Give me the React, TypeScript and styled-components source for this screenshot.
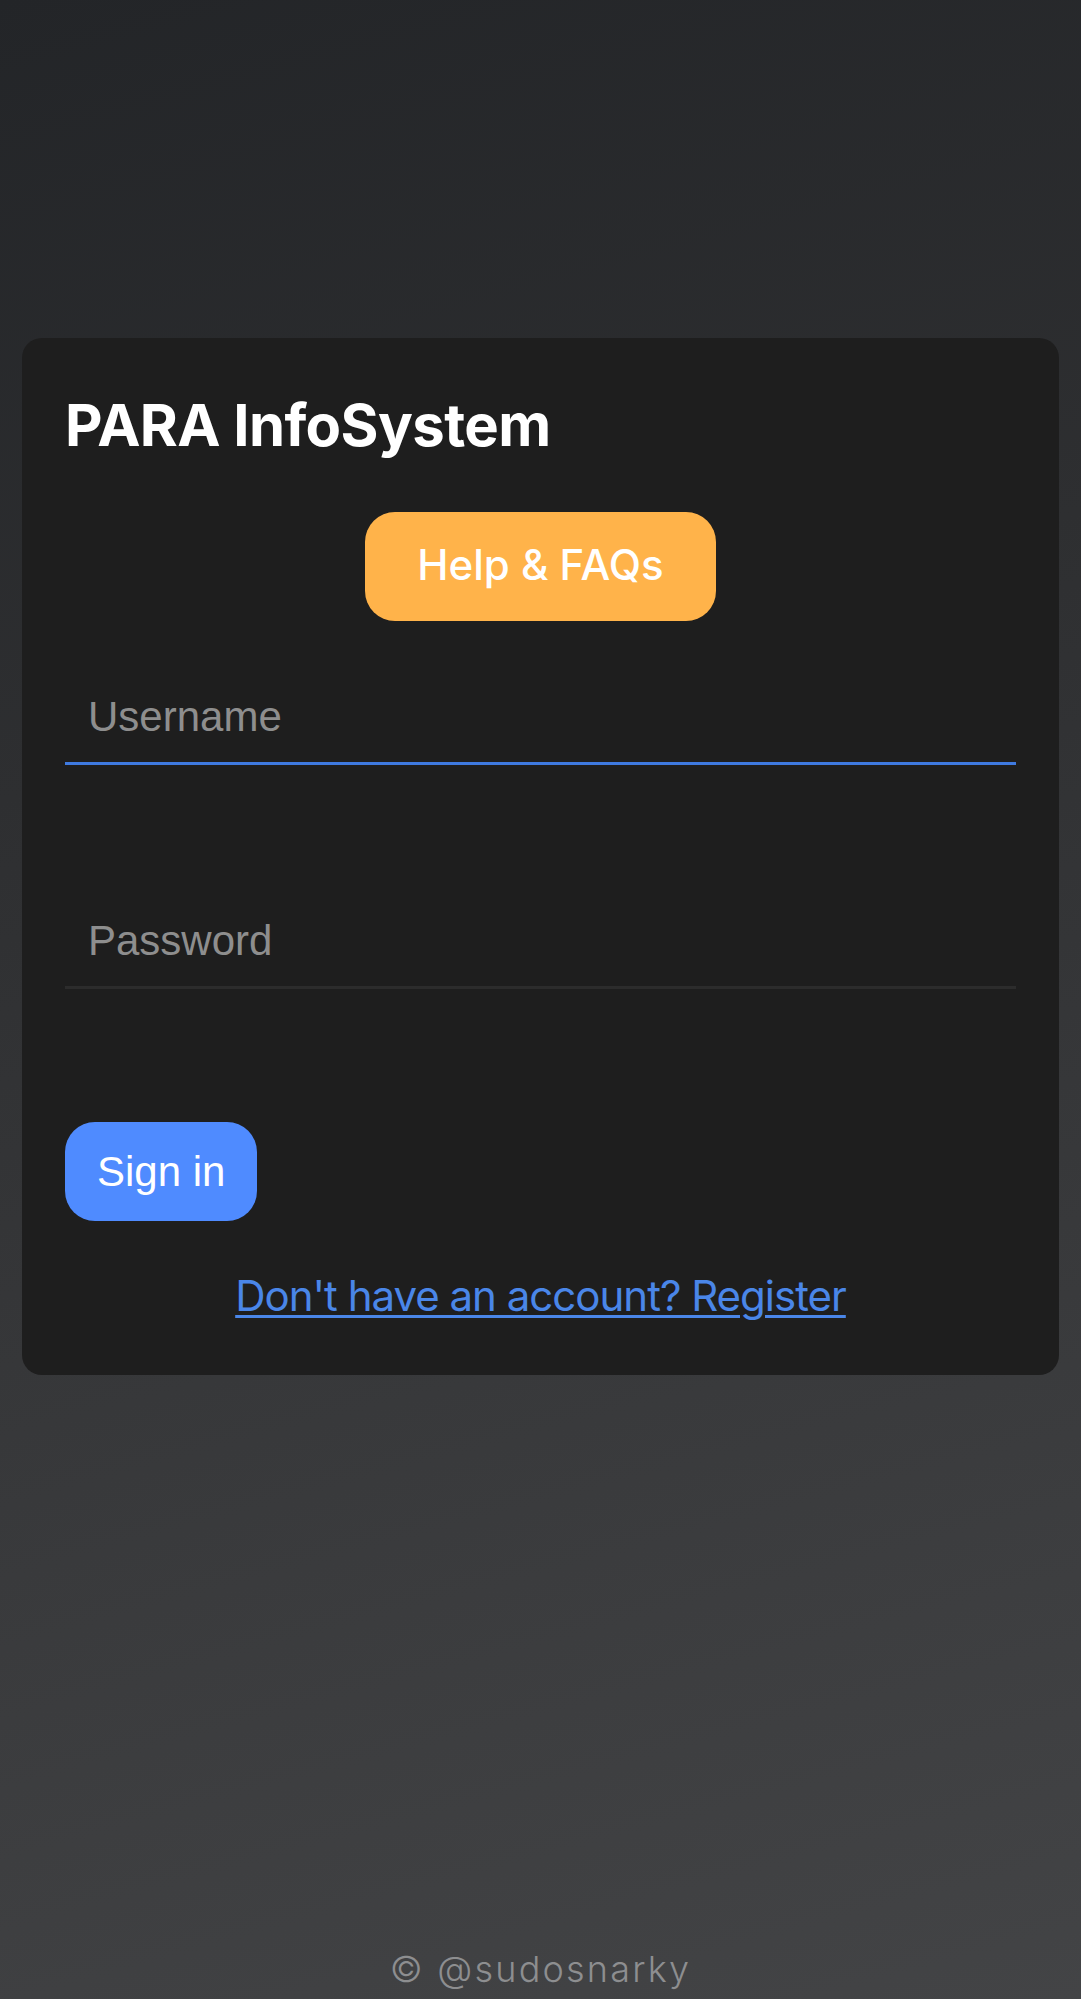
import React from "react";
import styled, { createGlobalStyle } from "styled-components";

const GlobalStyle = createGlobalStyle`
  html, body {
    margin: 0;
    padding: 0;
  }
  body {
    background: linear-gradient(165deg, #232528 0%, #2e2f31 35%, #434446 100%);
    min-height: 1999px;
    font-family: Inter, "Noto Sans", sans-serif;
  }
  * { box-sizing: border-box; }
`;

const Page = styled.div`
  min-height: 1999px;
  display: flex;
  flex-direction: column;
  align-items: stretch;
  padding: 338px 22px 8px 22px;
`;

const Card = styled.main`
  background: #1e1e1e;
  border-radius: 20px;
  padding: 52px 43px 45px 43px;
  display: flex;
  flex-direction: column;
`;

const Title = styled.h1`
  margin: 0;
  font-family: Inter, sans-serif;
  font-weight: 700;
  font-size: 58px;
  line-height: 70px;
  letter-spacing: -0.6px;
  color: #ffffff;
`;

const HelpRow = styled.div`
  display: flex;
  justify-content: center;
  margin-top: 52px;
`;

const HelpButton = styled.button`
  height: 109px;
  padding: 0 52px 4px 52px;
  border: none;
  border-radius: 30px;
  background: #ffb34a;
  color: #ffffff;
  font-family: Inter, sans-serif;
  font-weight: 500;
  font-size: 42px;
  display: flex;
  align-items: center;
  cursor: pointer;
`;

const Field = styled.input<{ $focused?: boolean; $first?: boolean }>`
  display: block;
  width: 100%;
  margin-top: ${(p) => (p.$first ? "61px" : "141px")};
  padding: 12px 0 23px 23px;
  height: 83px;
  background: transparent;
  border: none;
  border-bottom: 3px solid ${(p) => (p.$focused ? "#3f7ae0" : "#2c2c2c")};
  color: #ffffff;
  font-family: "Liberation Sans", Arial, sans-serif;
  font-size: 42px;
  outline: none;
  caret-color: #ffffff;
  &::placeholder {
    color: #8e8e8e;
  }
`;

const SignInRow = styled.div`
  display: flex;
  margin-top: 133px;
`;

const SignInButton = styled.button`
  height: 99px;
  padding: 0 32px;
  border: none;
  border-radius: 30px;
  background: #4f8bff;
  color: #ffffff;
  font-family: "Liberation Sans", Arial, sans-serif;
  font-size: 42px;
  display: flex;
  align-items: center;
  cursor: pointer;
`;

const RegisterRow = styled.div`
  margin-top: 50px;
  text-align: center;
  line-height: 50px;
`;

const RegisterLink = styled.a`
  font-family: Inter, sans-serif;
  font-size: 42px;
  letter-spacing: -1px;
  color: #4a86e8;
  text-decoration: underline;
  text-underline-offset: 4px;
  text-decoration-thickness: 3px;
`;

const Footer = styled.footer`
  margin-top: auto;
  text-align: center;
  font-family: Inter, sans-serif;
  font-weight: 300;
  font-size: 36px;
  line-height: 44px;
  color: #8d8e90;
  letter-spacing: 2.2px;
`;

export default function App() {
  return (
    <>
      <GlobalStyle />
      <Page>
        <Card>
          <Title>PARA InfoSystem</Title>
          <HelpRow>
            <HelpButton type="button">Help &amp; FAQs</HelpButton>
          </HelpRow>
          <Field $first $focused placeholder="Username" autoFocus />
          <Field type="password" placeholder="Password" />
          <SignInRow>
            <SignInButton type="button">Sign in</SignInButton>
          </SignInRow>
          <RegisterRow>
            <RegisterLink href="#">Don't have an account? Register</RegisterLink>
          </RegisterRow>
        </Card>
        <Footer>© @sudosnarky</Footer>
      </Page>
    </>
  );
}
